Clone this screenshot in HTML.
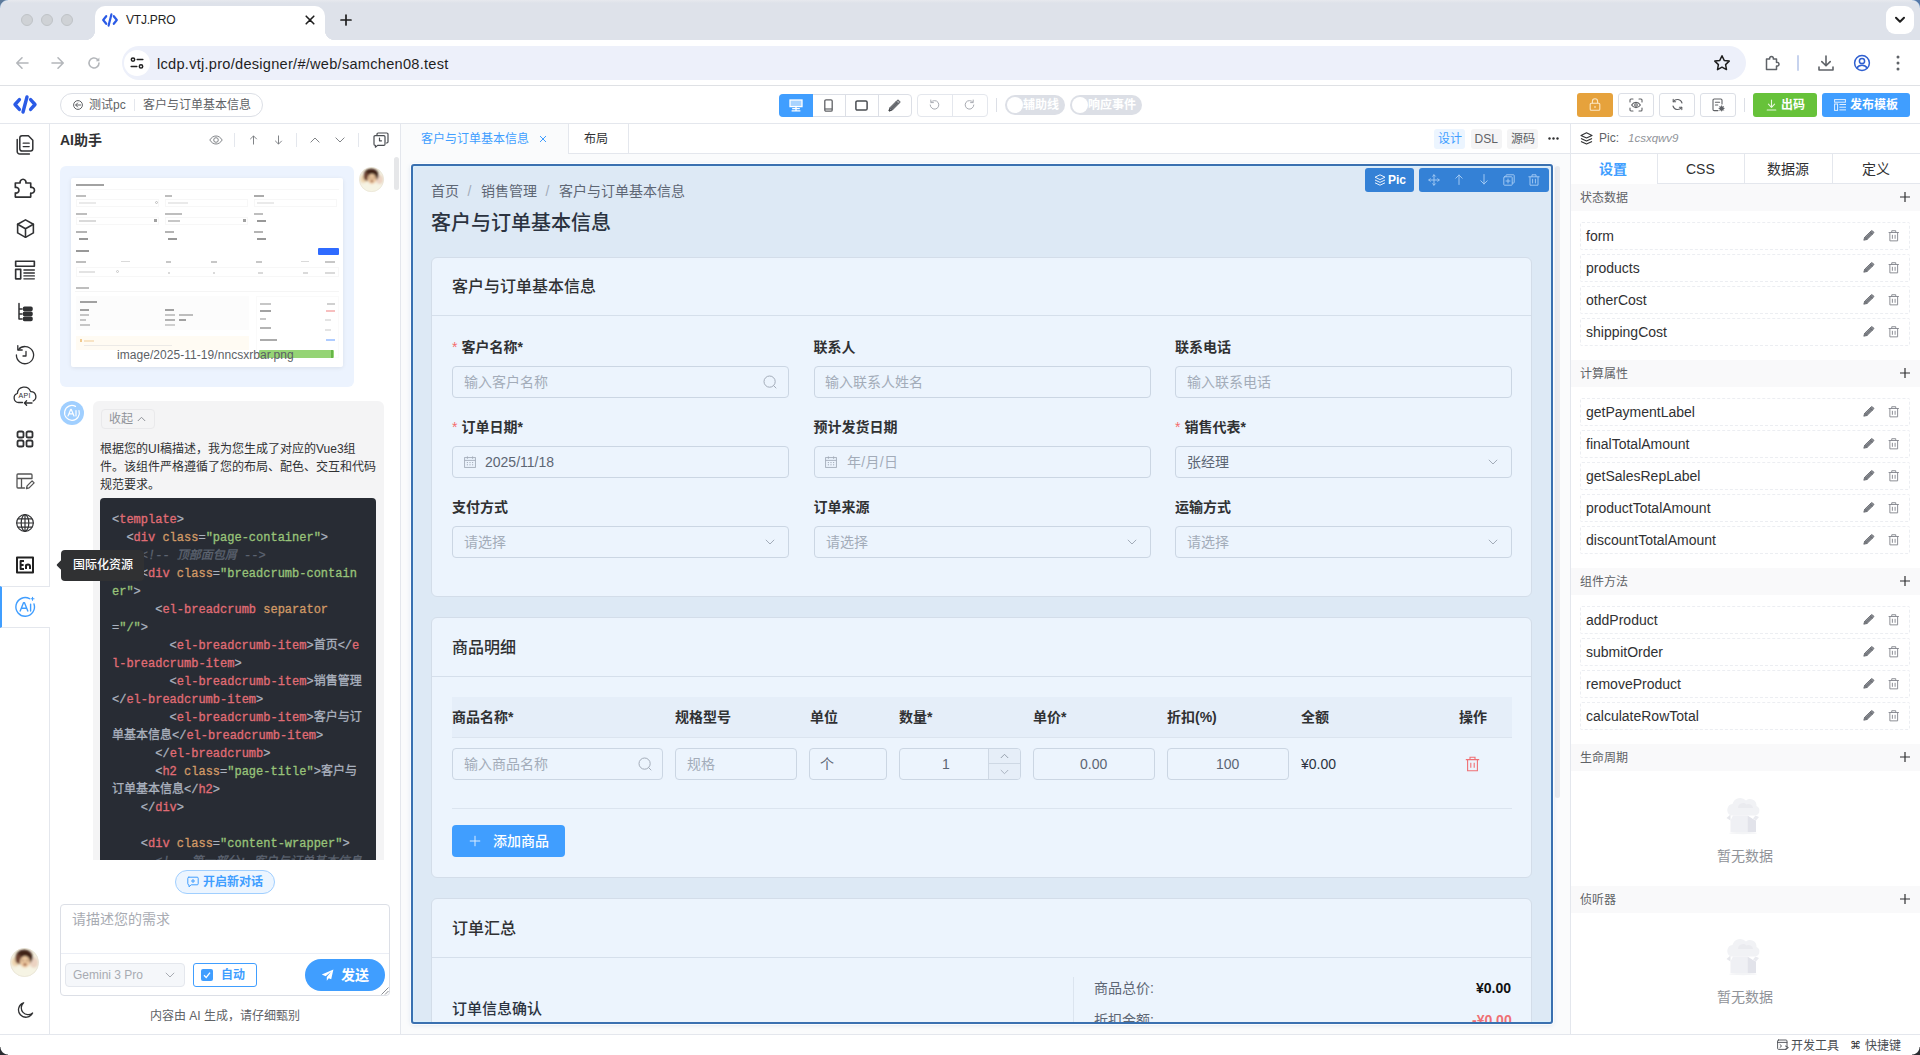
<!DOCTYPE html>
<html lang="zh-CN">
<head>
<meta charset="utf-8">
<title>VTJ.PRO</title>
<style>
*{box-sizing:border-box;margin:0;padding:0}
html,body{width:1920px;height:1055px;overflow:hidden;background:#fff}
body{font-family:"Liberation Sans","Noto Sans CJK SC",sans-serif;font-size:14px;color:#303133;position:relative}
.abs{position:absolute}
.t{position:absolute;white-space:nowrap;line-height:1}
svg{display:block;overflow:visible}
.ico{position:absolute}
/* ===== browser chrome ===== */
#tabbar{left:0;top:0;width:1920px;height:40px;background:linear-gradient(#e7e9ee 0,#dee2ea 3px,#dee2ea 100%)}
#tab{left:95px;top:6px;width:230px;height:34px;background:#fff;border-radius:10px 10px 0 0}
#tab:before,#tab:after{content:"";position:absolute;bottom:0;width:10px;height:10px}
#tab:before{left:-10px;background:radial-gradient(circle at 0 0,transparent 10px,#fff 10.5px)}
#tab:after{right:-10px;background:radial-gradient(circle at 100% 0,transparent 10px,#fff 10.5px)}
.tl{position:absolute;top:14px;width:12px;height:12px;border-radius:50%;background:#cfd2d6;border:1px solid #bfc3c7}
#addr{left:0;top:40px;width:1920px;height:46px;background:#fff;border-bottom:1px solid #dfe1e5}
#urlpill{left:122px;top:46px;width:1624px;height:34px;border-radius:17px;background:#edf0fa}
/* ===== app toolbar ===== */
#apptb{left:0;top:87px;width:1920px;height:37px;background:#fff;border-bottom:1px solid #e4e7ed}
.btn{position:absolute;top:94px;height:23px;border:1px solid #dcdfe6;border-radius:3px;background:#fff}
/* ===== panels ===== */
#lside{left:0;top:124px;width:50px;height:910px;background:#fff;border-right:1px solid #e4e7ed}
#aipanel{left:50px;top:124px;width:351px;height:910px;background:#fff;border-right:1px solid #e4e7ed}
#center{left:401px;top:124px;width:1169px;height:910px;background:#fafbfc}
#rpanel{left:1570px;top:124px;width:350px;height:910px;background:#fff;border-left:1px solid #e4e7ed}
#status{left:0;top:1034px;width:1920px;height:21px;background:#fff;border-top:1px solid #e4e7ed}

#thumb i{position:absolute;display:block;opacity:.55}
#code{font-family:"Liberation Mono","Noto Sans CJK SC",monospace;font-size:12px;color:#abb2bf;-webkit-text-stroke:.3px}
.cl{position:absolute;left:12px;white-space:pre;line-height:18px;height:18px}
.cp{color:#abb2bf}.ct{color:#e06c75}.ca{color:#d19a66}.cs{color:#98c379}.cc{color:#5c6370;font-style:italic}

/* center */
#sel{left:411px;top:164px;width:1142px;height:860px;border:2px solid #3a70b0;border-radius:3px;background:#dde9f5;overflow:hidden;box-shadow:0 0 0 1px rgba(255,255,255,.8),0 1px 5px rgba(60,110,180,.18),inset 0 0 0 1px rgba(214,240,255,.9)}
#page{position:absolute;left:-413px;top:-166px;width:1920px;height:1055px}
.card{position:absolute;left:431px;width:1101px;border:1px solid #d3dde9;border-radius:6px;background:#ecf4fd}
.chd{position:absolute;font-size:16px;font-weight:500;color:#303133;white-space:nowrap;line-height:1}
.hl{position:absolute;height:1px;background:#d5dfeb}
.lbl{position:absolute;font-size:14px;font-weight:700;color:#303133;white-space:nowrap;line-height:1}
.req{color:#f56c6c;font-weight:400;margin-right:4px}
.inp{position:absolute;height:32px;border:1px solid #cbd6e3;border-radius:4px;background:#ecf4fd}
.ph{position:absolute;font-size:14px;color:#a3acb9;white-space:nowrap;line-height:1}
.val{position:absolute;font-size:14px;color:#5d6674;white-space:nowrap;line-height:1}

/* right panel */
.sec{position:absolute;left:1571px;width:349px;height:27px;background:#f9f9fa}
.sect{position:absolute;left:1580px;font-size:12px;color:#606266;white-space:nowrap;line-height:1}
.item{position:absolute;left:1580px;width:330px;height:28px;border:1px dashed #eceef2;border-radius:2px}
.itxt{position:absolute;left:1586px;font-size:14px;color:#303133;white-space:nowrap;line-height:1}
.empt{position:absolute;font-size:14px;color:#909399;white-space:nowrap;line-height:1;left:1717px}
</style>
</head>
<body>
<!-- ================= BROWSER CHROME ================= -->
<div class="abs" id="tabbar"></div>
<div class="abs" id="tab"></div>
<div class="tl" style="left:21px"></div><div class="tl" style="left:41px"></div><div class="tl" style="left:61px"></div>
<div class="abs" id="addr"></div>
<div class="abs" id="urlpill"></div>

<!-- tab -->
<svg class="ico" style="left:102px;top:13px" width="16" height="14" viewBox="0 0 16 14"><g fill="none" stroke="#2b5be6" stroke-width="2.2" stroke-linecap="round" stroke-linejoin="round"><path d="M4.2 3.2 1.2 7l3 3.8"/><path d="M11.8 3.2 14.8 7l-3 3.8"/><path d="M9.4 1.4 6.6 12.6"/></g></svg>
<div class="t" style="left:126px;top:14px;font-size:12px;color:#1f1f1f;letter-spacing:-0.2px">VTJ.PRO</div>
<svg class="ico" style="left:305px;top:15px" width="10" height="10" viewBox="0 0 10 10"><path d="M1.2 1.2l7.6 7.6M8.8 1.2 1.2 8.8" stroke="#1f1f1f" stroke-width="1.6" stroke-linecap="round"/></svg>
<svg class="ico" style="left:340px;top:14px" width="12" height="12" viewBox="0 0 12 12"><path d="M6 1v10M1 6h10" stroke="#1f1f1f" stroke-width="1.7" stroke-linecap="round"/></svg>
<div class="abs" style="left:1886px;top:6px;width:28px;height:28px;border-radius:9px;background:#fff"></div>
<svg class="ico" style="left:1894px;top:16px" width="12" height="8" viewBox="0 0 12 8"><path d="M2 1.8 6 5.8l4-4" fill="none" stroke="#1f1f1f" stroke-width="2" stroke-linecap="round" stroke-linejoin="round"/></svg>
<!-- nav icons -->
<svg class="ico" style="left:15px;top:56px" width="14" height="14" viewBox="0 0 14 14"><path d="M13 7H2M7 1.8 1.8 7 7 12.2" fill="none" stroke="#b4b7bb" stroke-width="1.6" stroke-linecap="round" stroke-linejoin="round"/></svg>
<svg class="ico" style="left:51px;top:56px" width="14" height="14" viewBox="0 0 14 14"><path d="M1 7h11M7 1.8 12.2 7 7 12.2" fill="none" stroke="#b4b7bb" stroke-width="1.6" stroke-linecap="round" stroke-linejoin="round"/></svg>
<svg class="ico" style="left:87px;top:56px" width="14" height="14" viewBox="0 0 14 14"><path d="M12 7a5 5 0 1 1-1.6-3.7" fill="none" stroke="#b4b7bb" stroke-width="1.6" stroke-linecap="round"/><path d="M12.4 1.6v3.6H8.8z" fill="#b4b7bb"/></svg>
<div class="abs" style="left:124px;top:50px;width:26px;height:26px;border-radius:50%;background:#fff"></div>
<svg class="ico" style="left:130px;top:57px" width="14" height="12" viewBox="0 0 14 12"><g fill="none" stroke="#1f1f1f" stroke-width="1.5" stroke-linecap="round"><circle cx="3" cy="2.6" r="1.7"/><path d="M7.2 2.6h5.6"/><circle cx="11" cy="9.4" r="1.7"/><path d="M1.2 9.4h5.6"/></g></svg>
<div class="t" style="left:157px;top:56.500px;font-size:14.6px;color:#1f1f1f;letter-spacing:0.26px">lcdp.vtj.pro/designer/#/web/samchen08.test</div>
<svg class="ico" style="left:1713px;top:54px" width="18" height="18" viewBox="0 0 18 18"><path d="M9 1.8l2.2 4.6 5 .7-3.6 3.5.9 5L9 13.2l-4.5 2.4.9-5L1.8 7.1l5-.7z" fill="none" stroke="#1f1f1f" stroke-width="1.5" stroke-linejoin="round"/></svg>
<svg class="ico" style="left:1764px;top:54px" width="18" height="18" viewBox="0 0 18 18"><path d="M2.5 5h3.2a1.9 1.9 0 1 1 3.6 0h3.2v3.4a1.9 1.9 0 1 1 0 3.6v3.5h-10z" fill="none" stroke="#5f6368" stroke-width="1.5" stroke-linejoin="round"/></svg>
<div class="abs" style="left:1797px;top:55px;width:2px;height:16px;background:#c7d3ee;border-radius:1px"></div>
<svg class="ico" style="left:1817px;top:54px" width="18" height="18" viewBox="0 0 18 18"><path d="M9 2v9.5M4.8 7.6 9 11.8l4.2-4.2M2 13v3h14v-3" fill="none" stroke="#5f6368" stroke-width="1.6" stroke-linecap="round" stroke-linejoin="round"/></svg>
<svg class="ico" style="left:1853px;top:54px" width="18" height="18" viewBox="0 0 18 18"><g fill="none" stroke="#2f5fd0" stroke-width="1.5"><circle cx="9" cy="9" r="7.4"/><circle cx="9" cy="7" r="2.6"/><path d="M3.8 14.2c1.2-2 3-2.9 5.2-2.9s4 .9 5.2 2.9"/></g></svg>
<svg class="ico" style="left:1896px;top:55px" width="4" height="16" viewBox="0 0 4 16"><g fill="#5f6368"><circle cx="2" cy="2" r="1.5"/><circle cx="2" cy="8" r="1.5"/><circle cx="2" cy="14" r="1.5"/></g></svg>
<!--CHROME-CONTENT-->
<!-- ================= APP TOOLBAR ================= -->
<div class="abs" id="apptb"></div>

<svg class="ico" style="left:13px;top:95px" width="24" height="19" viewBox="0 0 24 19"><g fill="none" stroke="#2b5be6" stroke-width="3.4" stroke-linecap="round" stroke-linejoin="round"><path d="M6.4 4.6 2 9.5l4.4 4.9"/><path d="M17.6 4.6 22 9.5l-4.4 4.9"/><path d="M14 2 10 17"/></g></svg>
<div class="abs" style="left:60px;top:93px;width:203px;height:24px;border:1px solid #dcdfe6;border-radius:12px;background:#fff"></div>
<svg class="ico" style="left:73px;top:100px" width="10" height="10" viewBox="0 0 10 10"><g fill="none" stroke="#606266" stroke-width="1"><circle cx="5" cy="5" r="4.4"/><path d="M7.6 5H2.8M4.6 3 2.7 5l1.9 2" stroke-linecap="round" stroke-linejoin="round"/></g></svg>
<div class="t" style="left:89px;top:99px;font-size:12px;color:#606266">测试pc</div>
<div class="abs" style="left:134px;top:99px;width:1px;height:12px;background:#e4e7ed"></div>
<div class="t" style="left:143px;top:99px;font-size:12px;color:#606266">客户与订单基本信息</div>
<!-- device group -->
<div class="abs" style="left:779px;top:94px;width:133px;height:23px;border:1px solid #dcdfe6;border-radius:4px;background:#fff"></div>
<div class="abs" style="left:779px;top:94px;width:34px;height:23px;border-radius:4px 0 0 4px;background:#409eff"></div>
<div class="abs" style="left:845px;top:95px;width:1px;height:21px;background:#dcdfe6"></div>
<div class="abs" style="left:878px;top:95px;width:1px;height:21px;background:#dcdfe6"></div>
<svg class="ico" style="left:789px;top:99px" width="14" height="13" viewBox="0 0 14 13"><g fill="none" stroke="#fff" stroke-width="1.3"><rect x="1" y="1" width="12" height="6.6" fill="#a9d4ff"/><path d="M7 7.6v4M2.6 11.8h8.8M3.2 9.6h7.6"/></g></svg>
<svg class="ico" style="left:824px;top:99px" width="9" height="13" viewBox="0 0 9 13"><rect x=".8" y=".8" width="7.4" height="11.4" rx="1.2" fill="none" stroke="#606266" stroke-width="1.3"/><path d="M1 10h7" stroke="#606266" stroke-width="1.2"/></svg>
<svg class="ico" style="left:855px;top:100px" width="13" height="11" viewBox="0 0 13 11"><rect x=".9" y=".9" width="11.2" height="9.2" rx="1.4" fill="none" stroke="#4a4d52" stroke-width="1.5"/></svg>
<svg class="ico" style="left:888px;top:99px" width="13" height="13" viewBox="0 0 13 13"><g stroke="#45484d" stroke-width=".9" stroke-linejoin="round"><path d="M1 12l.9-3.300L9.200 1.400a1.100 1.100 0 0 1 1.600 0l.8.800a1.100 1.100 0 0 1 0 1.600L4.300 11.100z" fill="#a0a3a8"/><path d="M8 2.600 10.400 5M1.900 8.700l2.400 2.400M3.100 9.900 9.200 3.800M2.500 9.300 8.600 3.200M3.700 10.500 9.800 4.400" fill="none" stroke-width=".7"/><path d="M1 12l.5-1.800 1.300 1.300z" fill="#222"/></g></svg>
<!-- undo/redo -->
<div class="abs" style="left:917px;top:94px;width:71px;height:23px;border:1px solid #e4e7ed;border-radius:4px;background:#fff"></div>
<div class="abs" style="left:952px;top:95px;width:1px;height:21px;background:#e4e7ed"></div>
<svg class="ico" style="left:929px;top:99px" width="11" height="11" viewBox="0 0 11 11"><path d="M2.1 3.2A4.3 4.3 0 1 1 1.2 6" fill="none" stroke="#a8abb2" stroke-width="1" stroke-linecap="round"/><path d="M1.8 1v2.6h2.6" fill="none" stroke="#a8abb2" stroke-width="1" stroke-linecap="round" stroke-linejoin="round"/></svg>
<svg class="ico" style="left:964px;top:99px" width="11" height="11" viewBox="0 0 11 11"><path d="M8.9 3.2A4.3 4.3 0 1 0 9.8 6" fill="none" stroke="#a8abb2" stroke-width="1" stroke-linecap="round"/><path d="M9.2 1v2.6H6.600" fill="none" stroke="#a8abb2" stroke-width="1" stroke-linecap="round" stroke-linejoin="round"/></svg>
<div class="abs" style="left:996px;top:98px;width:1px;height:14px;background:#dcdfe6"></div>
<!-- switches -->
<div class="abs" style="left:1005px;top:95px;width:60px;height:20px;border-radius:10px;background:#dcdfe6"></div>
<div class="abs" style="left:1007px;top:97px;width:16px;height:16px;border-radius:50%;background:#fff"></div>
<div class="t" style="left:1023px;top:99px;font-size:12px;color:#fff;font-weight:700">辅助线</div>
<div class="abs" style="left:1070px;top:95px;width:72px;height:20px;border-radius:10px;background:#dcdfe6"></div>
<div class="abs" style="left:1072px;top:97px;width:16px;height:16px;border-radius:50%;background:#fff"></div>
<div class="t" style="left:1088px;top:99px;font-size:12px;color:#fff;font-weight:700">响应事件</div>
<!-- right buttons -->
<div class="abs" style="left:1577px;top:93px;width:36px;height:24px;border-radius:3px;background:#e6a23c"></div>
<svg class="ico" style="left:1589px;top:98px" width="12" height="13" viewBox="0 0 12 13"><g fill="none" stroke="#fbe7c6" stroke-width="1.1"><rect x="1.2" y="5.2" width="9.600" height="7" rx="1"/><path d="M3.4 5.200V3.400a2.600 2.600 0 0 1 5.200 0v1.800M6 8v2"/></g></svg>
<div class="btn" style="left:1618px;top:93px;width:36px;height:24px"></div>
<svg class="ico" style="left:1629px;top:98px" width="14" height="14" viewBox="0 0 14 14"><g fill="none" stroke="#606266" stroke-width="1.1" stroke-linecap="round"><path d="M1 4V2a1 1 0 0 1 1-1h2M10 1h2a1 1 0 0 1 1 1v2M13 10v2a1 1 0 0 1-1 1h-2M4 13H2a1 1 0 0 1-1-1v-2"/><path d="M2.600 7c1.200-1.800 2.700-2.600 4.400-2.600s3.200.8 4.400 2.600c-1.200 1.800-2.700 2.600-4.400 2.600S3.800 8.800 2.600 7z"/><circle cx="7" cy="7" r="1.300"/></g></svg>
<div class="btn" style="left:1659px;top:93px;width:36px;height:24px"></div>
<svg class="ico" style="left:1671px;top:98px" width="13" height="13" viewBox="0 0 13 13"><g fill="none" stroke="#606266" stroke-width="1.100" stroke-linecap="round" stroke-linejoin="round"><path d="M11 5A4.800 4.800 0 0 0 2.400 3.600M2 8a4.800 4.800 0 0 0 8.600 1.400"/><path d="M2.200 1.400v2.400h2.400M10.800 11.600V9.200H8.400"/></g></svg>
<div class="btn" style="left:1700px;top:93px;width:36px;height:24px"></div>
<svg class="ico" style="left:1712px;top:98px" width="13" height="14" viewBox="0 0 13 14"><g fill="none" stroke="#606266" stroke-width="1.100" stroke-linecap="round" stroke-linejoin="round"><path d="M6 12.600H2.200a1.200 1.200 0 0 1-1.200-1.200V2.200A1.200 1.200 0 0 1 2.200 1h6.600A1.200 1.200 0 0 1 10 2.200V6M3.400 4.200h4.200M3.400 7h2.400"/><circle cx="9.600" cy="10.400" r="1.700" fill="#606266"/><path d="M9.600 7.800v5.200M7 10.400h5.200M7.800 8.600l3.600 3.600M11.400 8.600l-3.600 3.600" stroke-width=".9"/></g></svg>
<div class="abs" style="left:1744px;top:98px;width:1px;height:14px;background:#dcdfe6"></div>
<div class="abs" style="left:1753px;top:93px;width:64px;height:24px;border-radius:3px;background:#67c23a"></div>
<svg class="ico" style="left:1766px;top:99px" width="11" height="12" viewBox="0 0 11 12"><path d="M5.500 1v7M2.400 5.200l3.100 3.100 3.100-3.100M1.200 11h8.600" fill="none" stroke="#e6f6dd" stroke-width="1.100" stroke-linecap="round" stroke-linejoin="round"/></svg>
<div class="t" style="left:1781px;top:99px;font-size:12px;color:#fff;font-weight:700">出码</div>
<div class="abs" style="left:1822px;top:93px;width:88px;height:24px;border-radius:3px;background:#409eff"></div>
<svg class="ico" style="left:1834px;top:99px" width="12" height="12" viewBox="0 0 12 12"><g fill="none" stroke="#e3f0ff" stroke-width="1"><rect x=".6" y=".6" width="10.800" height="2.600"/><rect x=".6" y="5" width="3" height="6.400"/><path d="M5.400 5.500H12M5.400 8.200H12M5.400 10.900H12"/></g></svg>
<div class="t" style="left:1850px;top:99px;font-size:12px;color:#fff;font-weight:700">发布模板</div>
<!--TOOLBAR-CONTENT-->
<!-- ================= PANELS ================= -->
<div class="abs" id="lside"></div>
<div class="abs" id="aipanel"></div>
<div class="abs" id="center"></div>
<div class="abs" id="rpanel"></div>
<div class="abs" id="status"></div>
<svg class="ico" style="left:15px;top:135px" width="20" height="20" viewBox="0 0 20 20"><g fill="none" stroke="#303133" stroke-width="1.5" stroke-linecap="round" stroke-linejoin="round"><path d="M7 0.800h6.400l4.400 4.400v8.600a2.200 2.200 0 0 1-2.200 2.200H7a2.200 2.200 0 0 1-2.200-2.200V3A2.200 2.200 0 0 1 7 .8z"/><path d="M2.200 4.400v12a2.600 2.600 0 0 0 2.600 2.600h9.600"/><path d="M8.200 8.200h6M8.200 11.600h6" stroke-width="1.300"/></g></svg>
<svg class="ico" style="left:14px;top:175.500px" width="22" height="22" viewBox="0 0 20 20"><g fill="none" stroke="#303133" stroke-width="1.5" stroke-linecap="round" stroke-linejoin="round"><path d="M1.200 6.400h4.400a2.700 2.700 0 1 1 5.200 0h4.400v4a2.700 2.700 0 1 1 0 5.200v3.600H1.200v-3.800a2.600 2.600 0 1 0 0-5z"/></g></svg>
<svg class="ico" style="left:14.500px;top:217.500px" width="21" height="21" viewBox="0 0 20 20"><g fill="none" stroke="#303133" stroke-width="1.5" stroke-linecap="round" stroke-linejoin="round"><path d="M10 1.800 17.500 6v8.200L10 18.400 2.500 14.200V6z"/><path d="M2.500 6 10 10.200 17.500 6M10 10.200v8.200"/></g></svg>
<svg class="ico" style="left:14px;top:259px" width="22" height="22" viewBox="0 0 20 20"><g fill="none" stroke="#303133" stroke-width="1.5" stroke-linecap="round" stroke-linejoin="round"><rect x="1.500" y="2" width="17" height="4.600"/><rect x="1.500" y="9.400" width="4.600" height="8.600"/><path d="M9 10h9.500M9 12.700h9.500M9 15.400h9.500M9 18h9.500" stroke-width="1.200"/></g></svg>
<svg class="ico" style="left:15px;top:302px" width="20" height="20" viewBox="0 0 20 20"><g fill="none" stroke="#303133" stroke-width="1.5" stroke-linecap="round" stroke-linejoin="round"><path d="M4 1.500v15.500h3M4 7h3M4 12h3"/><rect x="8.500" y="5.200" width="8.500" height="3.200" rx="1" fill="#303133"/><rect x="8.500" y="10.200" width="8.500" height="3.200" rx="1" fill="#303133"/><rect x="8.500" y="15.200" width="8.500" height="3.200" rx="1" fill="#303133"/></g></svg>
<svg class="ico" style="left:15px;top:345px" width="20" height="20" viewBox="0 0 20 20"><g fill="none" stroke="#303133" stroke-width="1.5" stroke-linecap="round" stroke-linejoin="round"><path d="M3.400 4.600A8.600 8.600 0 1 1 1.400 10" stroke-width="1.300"/><path d="M2.800 0.600v4.400h4.400" stroke-width="1.300"/><path d="M11 6.500v4.500h-3" stroke-width="1.300"/></g></svg>
<svg class="ico" style="left:15px;top:387px" width="20" height="20" viewBox="0 0 20 20"><g fill="none" stroke="#303133" stroke-width="1.5" stroke-linecap="round" stroke-linejoin="round"><path d="M7.500 15.500H3.600a4.600 4.600 0 0 1-1.200-9A6.800 6.800 0 0 1 15.600 4.600a5 5 0 0 1 2.600 9.400" stroke-width="1.300"/><path d="M17 16H9.500M11.600 13.800l-2.200 2.200 2.200 2.200" stroke-width="1.300"/></g></svg>
<svg class="ico" style="left:15px;top:429px" width="20" height="20" viewBox="0 0 20 20"><g fill="none" stroke="#303133" stroke-width="1.5" stroke-linecap="round" stroke-linejoin="round"><rect x="2.500" y="2.500" width="6" height="6" rx="1.600" stroke-width="1.800"/><rect x="11.500" y="2.500" width="6" height="6" rx="1.600" stroke-width="1.800"/><rect x="2.500" y="11.500" width="6" height="6" rx="1.600" stroke-width="1.800"/><rect x="11.500" y="11.500" width="6" height="6" rx="1.600" stroke-width="1.800"/></g></svg>
<svg class="ico" style="left:15px;top:471px" width="20" height="20" viewBox="0 0 20 20"><g fill="none" stroke="#303133" stroke-width="1.5" stroke-linecap="round" stroke-linejoin="round"><path d="M17 7.500V4a1 1 0 0 0-1-1H3a1 1 0 0 0-1 1v12a1 1 0 0 0 1 1h6.500M2 7.500h15M6.500 7.500V17" stroke-width="1.300" stroke="#555"/><path d="M11.500 17.500l.6-2.600 5-5 2 2-5 5z" stroke-width="1.300" stroke="#555"/></g></svg>
<svg class="ico" style="left:15px;top:513px" width="20" height="20" viewBox="0 0 20 20"><g fill="none" stroke="#303133" stroke-width="1.5" stroke-linecap="round" stroke-linejoin="round"><circle cx="10" cy="10" r="8.300" stroke-width="1.200"/><ellipse cx="10" cy="10" rx="3.800" ry="8.300" stroke-width="1.200"/><path d="M10 1.700v16.600M1.700 10h16.600M3 5.800h14M3 14.200h14" stroke-width="1.200"/></g></svg>
<svg class="ico" style="left:15px;top:555px" width="20" height="20" viewBox="0 0 20 20"><g fill="none" stroke="#303133" stroke-width="1.5" stroke-linecap="round" stroke-linejoin="round"><rect x="2" y="2.500" width="16" height="15" stroke-width="2" stroke="#222"/><path d="M9 6H5.600v8H9M5.600 10h3M11 14v-4.500M11 11.500c0-1.200.8-2 2-2s2 .8 2 2V14" stroke-width="2" stroke="#222" stroke-linecap="butt"/></g></svg>
<div class="t" style="left:18.500px;top:392px;font-size:7px;color:#303133;letter-spacing:0.300px">API</div>
<div class="abs" style="left:0;top:586px;width:50px;height:42px;background:#fff;border-top:1px solid #e4e7ed;border-bottom:1px solid #e4e7ed;border-left:2px solid #409eff"></div>
<svg class="ico" style="left:14px;top:596px" width="23" height="22" viewBox="0 0 23 22"><g fill="none" stroke="#409eff" stroke-width="1.400" stroke-linecap="round" stroke-linejoin="round"><path d="M15.500 2.700A9.300 9.300 0 1 0 20 8"/><path d="M6.200 15 9.600 6.600h.8L13.800 15M7.400 12.200h5.200M16.600 8.200V15"/><path d="M18.500 1.200v3M17 2.700h3" stroke-width="1.100"/></g></svg>
<svg class="ico" style="left:9.5px;top:948px" width="29" height="29" viewBox="0 0 25 25"><defs><clipPath id="avcb"><circle cx="12.500" cy="12.500" r="12.300"/></clipPath><filter id="avbb" x="-20%" y="-20%" width="140%" height="140%"><feGaussianBlur stdDeviation="0.800"/></filter></defs><g clip-path="url(#avcb)"><rect width="25" height="25" fill="#f3efdf"/><g filter="url(#avbb)"><ellipse cx="12.500" cy="22" rx="12" ry="7" fill="#f6f4e4"/><ellipse cx="20.500" cy="12.500" rx="3.600" ry="4.600" fill="#ecd3c2"/><ellipse cx="4.800" cy="12" rx="3.400" ry="3.800" fill="#efd6b0"/><ellipse cx="12.200" cy="8" rx="7.400" ry="6.600" fill="#3f2418"/><ellipse cx="7.200" cy="9.500" rx="2.600" ry="4" fill="#6e4232"/><ellipse cx="12.900" cy="12" rx="4.300" ry="5" fill="#f0caa2"/><ellipse cx="12.900" cy="14.200" rx="1.400" ry="1.100" fill="#8a4a30"/><circle cx="11.200" cy="10.800" r=".7" fill="#4a2a1c"/><circle cx="14.700" cy="10.800" r=".7" fill="#4a2a1c"/></g></g><circle cx="12.500" cy="12.500" r="12.100" fill="none" stroke="#e4ded2" stroke-width=".5"/></svg>
<svg class="ico" style="left:15px;top:1001px" width="19" height="19" viewBox="0 0 19 19"><path d="M8.600 1.800A7.400 7.400 0 1 0 17.600 12 6.700 6.700 0 0 1 8.600 1.800z" fill="none" stroke="#303133" stroke-width="1.300" stroke-linejoin="round"/></svg>
<!--LSIDE-CONTENT-->

<!-- header -->
<div class="t" style="left:60px;top:133px;font-size:14px;font-weight:700;color:#303133">AI助手</div>
<svg class="ico" style="left:209px;top:135px" width="14" height="10" viewBox="0 0 14 10"><g fill="none" stroke="#73767a" stroke-width=".9"><path d="M.8 5C2.500 2.300 4.600 1 7 1s4.500 1.300 6.200 4C11.500 7.700 9.400 9 7 9S2.500 7.700.8 5z"/><circle cx="7" cy="5" r="2.300"/></g></svg>
<div class="abs" style="left:234px;top:133px;width:1px;height:14px;background:#e4e7ed"></div>
<svg class="ico" style="left:249px;top:135px" width="9" height="10" viewBox="0 0 9 10"><path d="M4.500 9.500V1M1.200 4.200 4.500.9l3.300 3.300" fill="none" stroke="#73767a" stroke-width=".9"/></svg>
<svg class="ico" style="left:274px;top:135px" width="9" height="10" viewBox="0 0 9 10"><path d="M4.500.5V9M1.200 5.800 4.500 9.100l3.300-3.300" fill="none" stroke="#73767a" stroke-width=".9"/></svg>
<div class="abs" style="left:296px;top:133px;width:1px;height:14px;background:#e4e7ed"></div>
<svg class="ico" style="left:310px;top:137px" width="10" height="6" viewBox="0 0 10 6"><path d="M.6 5.400 5 1l4.400 4.400" fill="none" stroke="#73767a" stroke-width=".9"/></svg>
<svg class="ico" style="left:335px;top:137px" width="10" height="6" viewBox="0 0 10 6"><path d="M.6.600 5 5l4.400-4.400" fill="none" stroke="#73767a" stroke-width=".9"/></svg>
<div class="abs" style="left:358px;top:133px;width:1px;height:14px;background:#e4e7ed"></div>
<svg class="ico" style="left:373px;top:132px" width="16" height="16" viewBox="0 0 16 16"><g fill="none" stroke="#4a4d52" stroke-width="1.200" stroke-linejoin="round"><path d="M4 3V2.200A1.200 1.200 0 0 1 5.200 1h8.600A1.200 1.200 0 0 1 15 2.200v7.600a1.200 1.200 0 0 1-1.200 1.200H13"/><path d="M2.200 3.600h8.600A1.200 1.200 0 0 1 12 4.800v7.400a1.200 1.200 0 0 1-1.200 1.200H4.600L2.400 15.200v-1.800h-.2A1.200 1.200 0 0 1 1 12.200V4.800a1.200 1.200 0 0 1 1.200-1.200z"/><path d="M6.500 6v2.800h2" stroke-linecap="round"/></g></svg>
<!-- scrollbar -->
<div class="abs" style="left:394px;top:157px;width:5px;height:33px;border-radius:3px;background:#e6e7e9"></div>

<div class="abs" style="left:60px;top:166px;width:294px;height:221px;border-radius:6px;background:#ecf3fe"></div>
<div class="abs" style="left:71px;top:178px;width:272px;height:189px;background:#fff;border-radius:2px;box-shadow:0 1px 4px rgba(0,0,0,.08)"></div>
<div class="abs" id="thumb" style="left:71px;top:178px;width:272px;height:189px;overflow:hidden">
 <i style="left:5px;top:6px;width:28px;height:2px;background:#555"></i>
 <i style="left:4px;top:11px;width:264px;height:1px;background:#f0f0f0"></i>
 <i style="left:5px;top:17px;width:10px;height:2px;background:#888"></i><i style="left:94px;top:17px;width:7px;height:2px;background:#888"></i><i style="left:183px;top:17px;width:10px;height:2px;background:#666"></i>
 <i style="left:5px;top:21px;width:83px;height:8px;border:1px solid #f1f1f1"></i><i style="left:94px;top:21px;width:83px;height:8px;border:1px solid #f1f1f1"></i><i style="left:183px;top:21px;width:83px;height:8px;border:1px solid #f1f1f1"></i>
 <i style="left:8px;top:24px;width:17px;height:2px;background:#d8d8d8"></i><i style="left:97px;top:24px;width:20px;height:2px;background:#d8d8d8"></i><i style="left:186px;top:24px;width:17px;height:2px;background:#d8d8d8"></i><i style="left:84px;top:23px;width:3px;height:3px;border-radius:50%;border:1px solid #999"></i>
 <i style="left:5px;top:35px;width:11px;height:2px;background:#888"></i><i style="left:94px;top:35px;width:17px;height:2px;background:#888"></i><i style="left:183px;top:35px;width:9px;height:2px;background:#888"></i>
 <i style="left:5px;top:39px;width:83px;height:8px;border:1px solid #f1f1f1"></i><i style="left:94px;top:39px;width:83px;height:8px;border:1px solid #f1f1f1"></i>
 <i style="left:8px;top:42px;width:17px;height:2px;background:#bbb"></i><i style="left:97px;top:42px;width:12px;height:2px;background:#999"></i><i style="left:186px;top:42px;width:9px;height:2px;background:#444"></i><i style="left:83px;top:41px;width:3px;height:3px;background:#555"></i><i style="left:172px;top:41px;width:3px;height:3px;background:#555"></i>
 <i style="left:5px;top:53px;width:11px;height:2px;background:#777"></i><i style="left:94px;top:53px;width:9px;height:2px;background:#777"></i><i style="left:183px;top:53px;width:9px;height:2px;background:#777"></i>
 <i style="left:8px;top:60px;width:9px;height:2px;background:#444"></i><i style="left:97px;top:60px;width:9px;height:2px;background:#444"></i><i style="left:186px;top:60px;width:9px;height:2px;background:#444"></i>
 <i style="left:5px;top:72px;width:13px;height:2px;background:#444"></i>
 <i style="left:247px;top:70px;width:21px;height:7px;background:#2f6bff;border-radius:1px;opacity:1"></i>
 <i style="left:5px;top:83px;width:10px;height:2px;background:#888"></i><i style="left:50px;top:83px;width:9px;height:1px;background:#bbb"></i><i style="left:95px;top:83px;width:5px;height:2px;background:#999"></i><i style="left:140px;top:83px;width:6px;height:2px;background:#999"></i><i style="left:185px;top:83px;width:6px;height:2px;background:#999"></i><i style="left:230px;top:83px;width:8px;height:1px;background:#bbb"></i><i style="left:254px;top:83px;width:10px;height:2px;background:#999"></i>
 <i style="left:5px;top:89px;width:263px;height:10px;border:1px solid #f1f1f1"></i>
 <i style="left:8px;top:93px;width:16px;height:2px;background:#ccc"></i><i style="left:45px;top:92px;width:3px;height:3px;border-radius:50%;border:1px solid #aaa"></i><i style="left:97px;top:94px;width:2px;height:2px;background:#bbb"></i><i style="left:142px;top:94px;width:2px;height:2px;background:#bbb"></i><i style="left:187px;top:94px;width:5px;height:2px;background:#bbb"></i><i style="left:232px;top:94px;width:5px;height:2px;background:#bbb"></i><i style="left:254px;top:94px;width:10px;height:2px;background:#bbb"></i>
 <i style="left:5px;top:109px;width:13px;height:2px;background:#888"></i>
 <i style="left:4px;top:113px;width:264px;height:1px;background:#ececec"></i>
 <i style="left:5px;top:118px;width:173px;height:34px;background:#fafafa"></i>
 <i style="left:9px;top:123px;width:17px;height:2px;background:#555"></i>
 <i style="left:9px;top:131px;width:9px;height:2px;background:#555"></i><i style="left:94px;top:131px;width:9px;height:2px;background:#555"></i>
 <i style="left:9px;top:136px;width:9px;height:2px;background:#999"></i><i style="left:94px;top:136px;width:10px;height:2px;background:#999"></i><i style="left:108px;top:136px;width:14px;height:2px;background:#888"></i>
 <i style="left:9px;top:141px;width:6px;height:2px;background:#999"></i><i style="left:94px;top:141px;width:10px;height:2px;background:#777"></i><i style="left:108px;top:141px;width:7px;height:2px;background:#555"></i>
 <i style="left:9px;top:146px;width:10px;height:2px;background:#999"></i><i style="left:94px;top:146px;width:10px;height:2px;background:#aaa"></i>
 <i style="left:185px;top:118px;width:83px;height:62px;border:1px solid #f6f6f6"></i>
 <i style="left:189px;top:125px;width:11px;height:2px;background:#999"></i><i style="left:256px;top:125px;width:8px;height:2px;background:#aaa"></i>
 <i style="left:189px;top:132px;width:11px;height:2px;background:#555"></i><i style="left:255px;top:132px;width:9px;height:2px;background:#f08a8a"></i>
 <i style="left:189px;top:140px;width:6px;height:2px;background:#999"></i><i style="left:254px;top:141px;width:6px;height:2px;background:#ccc"></i>
 <i style="left:189px;top:149px;width:11px;height:2px;background:#777"></i><i style="left:254px;top:151px;width:6px;height:2px;background:#ccc"></i>
 <i style="left:189px;top:161px;width:17px;height:2px;background:#666"></i><i style="left:255px;top:161px;width:9px;height:2px;background:#6ea2ff"></i>
 <i style="left:5px;top:158px;width:173px;height:14px;background:#fff7ea"></i>
 <i style="left:9px;top:161px;width:2px;height:3px;background:#e6a23c"></i><i style="left:13px;top:162px;width:10px;height:2px;background:#f3d19e"></i>
 <i style="left:13px;top:167px;width:88px;height:1px;background:#ddd"></i>
 <i style="left:188px;top:172px;width:75px;height:8px;background:#95d475;border-radius:1px;opacity:1"></i><i style="left:260px;top:172px;width:2px;height:8px;background:#3f9a20"></i>
</div>
<div class="t" style="left:117px;top:349px;font-size:12px;color:#5c5f66;letter-spacing:0.050px">image/2025-11-19/nncsxrbar.png</div>

<svg class="ico" style="left:358.5px;top:166.5px" width="25" height="25" viewBox="0 0 25 25"><defs><clipPath id="avca"><circle cx="12.500" cy="12.500" r="12.300"/></clipPath><filter id="avba" x="-20%" y="-20%" width="140%" height="140%"><feGaussianBlur stdDeviation="0.800"/></filter></defs><g clip-path="url(#avca)"><rect width="25" height="25" fill="#f3efdf"/><g filter="url(#avba)"><ellipse cx="12.500" cy="22" rx="12" ry="7" fill="#f6f4e4"/><ellipse cx="20.500" cy="12.500" rx="3.600" ry="4.600" fill="#ecd3c2"/><ellipse cx="4.800" cy="12" rx="3.400" ry="3.800" fill="#efd6b0"/><ellipse cx="12.200" cy="8" rx="7.400" ry="6.600" fill="#3f2418"/><ellipse cx="7.200" cy="9.500" rx="2.600" ry="4" fill="#6e4232"/><ellipse cx="12.900" cy="12" rx="4.300" ry="5" fill="#f0caa2"/><ellipse cx="12.900" cy="14.200" rx="1.400" ry="1.100" fill="#8a4a30"/><circle cx="11.200" cy="10.800" r=".7" fill="#4a2a1c"/><circle cx="14.700" cy="10.800" r=".7" fill="#4a2a1c"/></g></g><circle cx="12.500" cy="12.500" r="12.100" fill="none" stroke="#e4ded2" stroke-width=".5"/></svg>
<!-- AI reply -->
<div class="abs" style="left:60px;top:401px;width:24px;height:24px;border-radius:50%;background:#a0cfff"></div>
<svg class="ico" style="left:63px;top:404px" width="18" height="18" viewBox="0 0 18 18"><g fill="none" stroke="#fff" stroke-width="1.200" stroke-linecap="round" stroke-linejoin="round"><path d="M12.500 2.400A7.400 7.400 0 1 0 16 6.600"/><path d="M5 12 7.700 5.400h.6L11 12M6 9.800h4M13 6.600V12"/></g></svg>
<div class="abs" id="aimsg" style="left:93px;top:401px;width:291px;height:459px;overflow:hidden;background:#f4f4f5;border-radius:6px 6px 0 0">
  <div class="abs" style="left:8px;top:8px;width:54px;height:20px;border:1px solid #e9e9eb;border-radius:4px;background:#f4f4f5"></div>
  <div class="t" style="left:16px;top:12px;font-size:12px;color:#909399">收起</div>
  <svg class="ico" style="left:44px;top:15px" width="9" height="6" viewBox="0 0 9 6"><path d="M.8 5 4.500 1.300 8.200 5" fill="none" stroke="#909399" stroke-width="1"/></svg>
  <div class="abs" style="left:7px;top:39px;width:280px;font-size:12px;line-height:18px;color:#303133;white-space:pre">根据您的UI稿描述，我为您生成了对应的Vue3组
件。该组件严格遵循了您的布局、配色、交互和代码
规范要求。</div>
  <div class="abs" id="code" style="left:7px;top:97px;width:276px;height:370px;background:#282c34;border-radius:4px;overflow:hidden">
<div class="cl" style="top:13px"><span class="cp">&lt;</span><span class="ct">template</span><span class="cp">&gt;</span></div>
<div class="cl" style="top:31px">  <span class="cp">&lt;</span><span class="ct">div</span> <span class="ca">class</span><span class="cp">=</span><span class="cs">"page-container"</span><span class="cp">&gt;</span></div>
<div class="cl" style="top:49px">    <span class="cc">&lt;!-- 顶部面包屑 --&gt;</span></div>
<div class="cl" style="top:67px">    <span class="cp">&lt;</span><span class="ct">div</span> <span class="ca">class</span><span class="cp">=</span><span class="cs">"breadcrumb-contain</span></div>
<div class="cl" style="top:85px"><span class="cs">er"</span><span class="cp">&gt;</span></div>
<div class="cl" style="top:103px">      <span class="cp">&lt;</span><span class="ct">el-breadcrumb</span> <span class="ca">separator</span></div>
<div class="cl" style="top:121px"><span class="cp">=</span><span class="cs">"/"</span><span class="cp">&gt;</span></div>
<div class="cl" style="top:139px">        <span class="cp">&lt;</span><span class="ct">el-breadcrumb-item</span><span class="cp">&gt;</span>首页<span class="cp">&lt;/</span><span class="ct">e</span></div>
<div class="cl" style="top:157px"><span class="ct">l-breadcrumb-item</span><span class="cp">&gt;</span></div>
<div class="cl" style="top:175px">        <span class="cp">&lt;</span><span class="ct">el-breadcrumb-item</span><span class="cp">&gt;</span>销售管理</div>
<div class="cl" style="top:193px"><span class="cp">&lt;/</span><span class="ct">el-breadcrumb-item</span><span class="cp">&gt;</span></div>
<div class="cl" style="top:211px">        <span class="cp">&lt;</span><span class="ct">el-breadcrumb-item</span><span class="cp">&gt;</span>客户与订</div>
<div class="cl" style="top:229px">单基本信息<span class="cp">&lt;/</span><span class="ct">el-breadcrumb-item</span><span class="cp">&gt;</span></div>
<div class="cl" style="top:247px">      <span class="cp">&lt;/</span><span class="ct">el-breadcrumb</span><span class="cp">&gt;</span></div>
<div class="cl" style="top:265px">      <span class="cp">&lt;</span><span class="ct">h2</span> <span class="ca">class</span><span class="cp">=</span><span class="cs">"page-title"</span><span class="cp">&gt;</span>客户与</div>
<div class="cl" style="top:283px">订单基本信息<span class="cp">&lt;/</span><span class="ct">h2</span><span class="cp">&gt;</span></div>
<div class="cl" style="top:301px">    <span class="cp">&lt;/</span><span class="ct">div</span><span class="cp">&gt;</span></div>
<div class="cl" style="top:319px"></div>
<div class="cl" style="top:337px">    <span class="cp">&lt;</span><span class="ct">div</span> <span class="ca">class</span><span class="cp">=</span><span class="cs">"content-wrapper"</span><span class="cp">&gt;</span></div>
<div class="cl" style="top:355px">      <span class="cc">&lt;!-- 第一部分: 客户与订单基本信息</span></div>
  </div>
</div>
<!-- tooltip -->
<div class="abs" style="left:57.500px;top:561px;width:8px;height:8px;background:#303133;transform:rotate(45deg);border-radius:1px"></div>
<div class="abs" style="left:61px;top:550px;width:83px;height:31px;border-radius:4px;background:#303133"></div>
<div class="t" style="left:73px;top:559px;font-size:12px;font-weight:500;color:#fff">国际化资源</div>
<!-- new chat -->
<div class="abs" style="left:175px;top:870px;width:100px;height:24px;border:1px solid #a0cfff;border-radius:12px;background:#ecf5ff"></div>
<svg class="ico" style="left:187px;top:876px" width="12" height="12" viewBox="0 0 12 12"><g fill="none" stroke="#409eff" stroke-width="1" stroke-linejoin="round" stroke-linecap="round"><path d="M1.800 1.200h8.400a1 1 0 0 1 1 1v5.600a1 1 0 0 1-1 1H4.200L2 10.800v-2h-.2a1 1 0 0 1-1-1V2.200a1 1 0 0 1 1-1z"/><path d="M6 3.400v3.200M4.400 5h3.200"/></g></svg>
<div class="t" style="left:203px;top:876px;font-size:12px;font-weight:700;color:#409eff">开启新对话</div>
<!-- input -->
<div class="abs" style="left:60px;top:904px;width:330px;height:92px;border:1px solid #dcdfe6;border-radius:4px;background:#fff"></div>
<div class="abs" style="left:61px;top:953px;width:328px;height:1px;background:#ebeef5"></div>
<div class="t" style="left:72px;top:912px;font-size:14px;color:#a8abb2">请描述您的需求</div>
<div class="abs" style="left:65px;top:963px;width:120px;height:24px;border:1px solid #e4e7ed;border-radius:4px;background:#f5f7fa"></div>
<div class="t" style="left:73px;top:969px;font-size:12px;color:#a8abb2">Gemini 3 Pro</div>
<svg class="ico" style="left:165px;top:972px" width="10" height="6" viewBox="0 0 10 6"><path d="M.8.800 5 5l4.200-4.200" fill="none" stroke="#a8abb2" stroke-width="1"/></svg>
<div class="abs" style="left:193px;top:963px;width:64px;height:24px;border:1px solid #409eff;border-radius:3px;background:#fff"></div>
<div class="abs" style="left:201px;top:969px;width:12px;height:12px;border-radius:2px;background:#409eff"></div>
<svg class="ico" style="left:203px;top:971px" width="8" height="8" viewBox="0 0 8 8"><path d="M1 4.200 3.200 6.400 7 1.600" fill="none" stroke="#fff" stroke-width="1.300"/></svg>
<div class="t" style="left:221px;top:969px;font-size:12px;font-weight:700;color:#409eff">自动</div>
<div class="abs" style="left:305px;top:959px;width:80px;height:32px;border-radius:16px;background:#409eff"></div>
<svg class="ico" style="left:321px;top:969px" width="13" height="13" viewBox="0 0 13 13"><path d="M12.400.6.800 5.600l3.800 1.600L10 2.800 5.800 8v3.800l2-2.600 2.400 1z" fill="#fff"/></svg>
<div class="t" style="left:341px;top:968px;font-size:14px;font-weight:700;color:#fff">发送</div>
<svg class="ico" style="left:381px;top:987px" width="8" height="8" viewBox="0 0 8 8"><path d="M7.500.500.500 7.500M7.500 4 4 7.500" stroke="#8a8d93" stroke-width="1"/></svg>
<div class="t" style="left:150px;top:1010px;font-size:12px;color:#606266">内容由 AI 生成，请仔细甄别</div>
<!--AI-CONTENT-->
<div class="abs" style="left:401px;top:124px;width:1169px;height:29px;background:#fff"></div>
<div class="abs" style="left:401px;top:124px;width:167px;height:30px;background:#fafbfc"></div>
<div class="abs" style="left:568px;top:153px;width:1002px;height:1px;background:#e4e7ed"></div>
<div class="abs" style="left:568px;top:124px;width:1px;height:29px;background:#e4e7ed"></div>
<div class="abs" style="left:628px;top:124px;width:1px;height:29px;background:#e4e7ed"></div>
<div class="t" style="left:421px;top:133px;font-size:12px;color:#409eff">客户与订单基本信息</div>
<svg class="ico" style="left:539px;top:135px" width="8" height="8" viewBox="0 0 8 8"><path d="M1 1l6 6M7 1 1 7" stroke="#409eff" stroke-width="1"/></svg>
<div class="t" style="left:584px;top:133px;font-size:12px;color:#303133">布局</div>
<div class="abs" style="left:1434px;top:129px;width:31px;height:20px;border-radius:3px;background:#ecf5ff"></div>
<div class="t" style="left:1438px;top:133px;font-size:12px;color:#409eff">设计</div>
<div class="abs" style="left:1471px;top:129px;width:31px;height:20px;border-radius:3px;background:#f4f4f5"></div>
<div class="t" style="left:1474.500px;top:133px;font-size:12px;color:#606266">DSL</div>
<div class="abs" style="left:1507px;top:129px;width:31px;height:20px;border-radius:3px;background:#f4f4f5"></div>
<div class="t" style="left:1511px;top:133px;font-size:12px;color:#606266">源码</div>
<svg class="ico" style="left:1548px;top:137px" width="11" height="3" viewBox="0 0 11 3"><g fill="#303133"><circle cx="1.500" cy="1.500" r="1.200"/><circle cx="5.500" cy="1.500" r="1.200"/><circle cx="9.500" cy="1.500" r="1.200"/></g></svg>
<div class="abs" style="left:1555px;top:166px;width:5px;height:632px;border-radius:3px;background:#eaebee"></div>
<div class="abs" id="sel"><div id="page">
<div class="t" style="left:431px;top:184px;font-size:14px;color:#5d6674">首页</div>
<div class="t" style="left:467.500px;top:184px;font-size:14px;color:#a3acb9">/</div>
<div class="t" style="left:481px;top:184px;font-size:14px;color:#5d6674">销售管理</div>
<div class="t" style="left:545.500px;top:184px;font-size:14px;color:#a3acb9">/</div>
<div class="t" style="left:559px;top:184px;font-size:14px;color:#5d6674">客户与订单基本信息</div>
<div class="t" style="left:431px;top:213px;font-size:20px;font-weight:500;color:#2b3340">客户与订单基本信息</div>
<div class="card" style="top:257px;height:340px"></div>
<div class="chd" style="left:452px;top:279px">客户与订单基本信息</div>
<div class="hl" style="left:432px;top:315px;width:1099px"></div>
<div class="lbl" style="left:452px;top:340px"><span class="req">*</span>客户名称*</div>
<div class="inp" style="left:452px;top:366px;width:337px"></div>
<div class="lbl" style="left:813.5px;top:340px">联系人</div>
<div class="inp" style="left:813.5px;top:366px;width:337px"></div>
<div class="lbl" style="left:1175px;top:340px">联系电话</div>
<div class="inp" style="left:1175px;top:366px;width:337px"></div>
<div class="lbl" style="left:452px;top:420px"><span class="req">*</span>订单日期*</div>
<div class="inp" style="left:452px;top:446px;width:337px"></div>
<div class="lbl" style="left:813.5px;top:420px">预计发货日期</div>
<div class="inp" style="left:813.5px;top:446px;width:337px"></div>
<div class="lbl" style="left:1175px;top:420px"><span class="req">*</span>销售代表*</div>
<div class="inp" style="left:1175px;top:446px;width:337px"></div>
<div class="lbl" style="left:452px;top:500px">支付方式</div>
<div class="inp" style="left:452px;top:526px;width:337px"></div>
<div class="lbl" style="left:813.5px;top:500px">订单来源</div>
<div class="inp" style="left:813.5px;top:526px;width:337px"></div>
<div class="lbl" style="left:1175px;top:500px">运输方式</div>
<div class="inp" style="left:1175px;top:526px;width:337px"></div>
<div class="ph" style="left:464px;top:375px">输入客户名称</div><svg class="ico" style="left:763px;top:375px" width="14" height="14" viewBox="0 0 14 14"><g fill="none" stroke="#a3acb9" stroke-width="1"><circle cx="6.600" cy="6.600" r="5.600"/><path d="M10.600 10.600 13 13" stroke-linecap="round"/></g></svg>
<div class="ph" style="left:825px;top:375px">输入联系人姓名</div>
<div class="ph" style="left:1187px;top:375px">输入联系电话</div>
<svg class="ico" style="left:464px;top:456px" width="12" height="12" viewBox="0 0 12 12"><g fill="none" stroke="#a3acb9" stroke-width=".9"><rect x=".6" y="1.600" width="10.800" height="9.800"/><path d="M.6 4.400h10.800M3.400.4v2.400M8.600.4v2.400"/><path d="M2.800 6.600h1.200M5.400 6.600h1.200M8 6.600h1.200M2.800 8.800h1.200M5.400 8.800h1.200M8 8.800h1.200" stroke-width="1"/></g></svg><div class="val" style="left:485px;top:455px">2025/11/18</div>
<svg class="ico" style="left:825px;top:456px" width="12" height="12" viewBox="0 0 12 12"><g fill="none" stroke="#a3acb9" stroke-width=".9"><rect x=".6" y="1.600" width="10.800" height="9.800"/><path d="M.6 4.400h10.800M3.400.4v2.400M8.600.4v2.400"/><path d="M2.800 6.600h1.200M5.400 6.600h1.200M8 6.600h1.200M2.800 8.800h1.200M5.400 8.800h1.200M8 8.800h1.200" stroke-width="1"/></g></svg><div class="ph" style="left:847px;top:455px;letter-spacing:.3px">年/月/日</div>
<div class="val" style="left:1187px;top:455px">张经理</div><svg class="ico" style="left:1488px;top:459px" width="10" height="6" viewBox="0 0 10 6"><path d="M.8.800 5 5l4.200-4.200" fill="none" stroke="#a3acb9" stroke-width="1"/></svg>
<div class="ph" style="left:464px;top:535px">请选择</div><svg class="ico" style="left:765px;top:539px" width="10" height="6" viewBox="0 0 10 6"><path d="M.8.800 5 5l4.200-4.200" fill="none" stroke="#a3acb9" stroke-width="1"/></svg>
<div class="ph" style="left:826px;top:535px">请选择</div><svg class="ico" style="left:1127px;top:539px" width="10" height="6" viewBox="0 0 10 6"><path d="M.8.800 5 5l4.200-4.200" fill="none" stroke="#a3acb9" stroke-width="1"/></svg>
<div class="ph" style="left:1187px;top:535px">请选择</div><svg class="ico" style="left:1488px;top:539px" width="10" height="6" viewBox="0 0 10 6"><path d="M.8.800 5 5l4.200-4.200" fill="none" stroke="#a3acb9" stroke-width="1"/></svg>
<div class="card" style="top:617px;height:261px"></div>
<div class="chd" style="left:452px;top:640px">商品明细</div>
<div class="hl" style="left:432px;top:676px;width:1099px"></div>
<div class="abs" style="left:452px;top:697px;width:1060px;height:40px;background:#e5eef9"></div>
<div class="hl" style="left:452px;top:737px;width:1060px;background:#dbe4ef"></div>
<div class="lbl" style="left:452px;top:710px">商品名称*</div>
<div class="lbl" style="left:675px;top:710px">规格型号</div>
<div class="lbl" style="left:810px;top:710px">单位</div>
<div class="lbl" style="left:899px;top:710px">数量*</div>
<div class="lbl" style="left:1033px;top:710px">单价*</div>
<div class="lbl" style="left:1167px;top:710px">折扣(%)</div>
<div class="lbl" style="left:1301px;top:710px">全额</div>
<div class="lbl" style="left:1459px;top:710px">操作</div>
<div class="inp" style="left:452px;top:748px;width:211px"></div><div class="ph" style="left:464px;top:757px">输入商品名称</div><svg class="ico" style="left:638px;top:757px" width="14" height="14" viewBox="0 0 14 14"><g fill="none" stroke="#a3acb9" stroke-width="1"><circle cx="6.600" cy="6.600" r="5.600"/><path d="M10.600 10.600 13 13" stroke-linecap="round"/></g></svg>
<div class="inp" style="left:675px;top:748px;width:122px"></div><div class="ph" style="left:687px;top:757px">规格</div>
<div class="inp" style="left:809px;top:748px;width:78px"></div><div class="val" style="left:820px;top:757px">个</div>
<div class="inp" style="left:899px;top:748px;width:122px"></div><div class="abs" style="left:988px;top:749px;width:1px;height:30px;background:#ced8e4"></div><div class="abs" style="left:989px;top:763px;width:31px;height:1px;background:#ced8e4"></div><div class="abs" style="left:989px;top:749px;width:31px;height:30px;background:#e6eef8;border-radius:0 3px 3px 0;z-index:-0"></div><div class="abs" style="left:989px;top:763px;width:31px;height:1px;background:#ced8e4"></div>
<div class="val" style="left:942px;top:757px">1</div>
<svg class="ico" style="left:1000px;top:753px" width="9" height="6" viewBox="0 0 9 6"><path d="M.8 5 4.500 1.300 8.200 5" fill="none" stroke="#8f98a5" stroke-width=".9"/></svg>
<svg class="ico" style="left:1000px;top:769px" width="9" height="6" viewBox="0 0 9 6"><path d="M.8 1 4.500 4.700 8.200 1" fill="none" stroke="#a3acb9" stroke-width=".9"/></svg>
<div class="inp" style="left:1033px;top:748px;width:122px"></div><div class="val" style="left:1080px;top:757px">0.00</div>
<div class="inp" style="left:1167px;top:748px;width:122px"></div><div class="val" style="left:1216px;top:757px">100</div>
<div class="t" style="left:1301px;top:757px;font-size:14px;color:#2b3340">¥0.00</div>
<svg class="ico" style="left:1465px;top:756px" width="15" height="16" viewBox="0 0 15 16"><g fill="none" stroke="#ef6f74" stroke-width="1.100"><path d="M.8 3.600h13.400M5 3.400V1.200h5v2.200M2.600 3.800v11h9.800v-11M5.800 6.800v5M9.200 6.800v5"/></g></svg>
<div class="hl" style="left:452px;top:808px;width:1060px;background:#dbe4ef"></div>
<div class="abs" style="left:452px;top:825px;width:113px;height:32px;border-radius:4px;background:#409eff"></div>
<svg class="ico" style="left:469px;top:835px" width="12" height="12" viewBox="0 0 12 12"><path d="M6 .8v10.400M.8 6h10.400" stroke="#d9ecff" stroke-width="1"/></svg>
<div class="t" style="left:493px;top:834px;font-size:14px;font-weight:500;color:#fff">添加商品</div>
<div class="card" style="top:898px;height:200px"></div>
<div class="chd" style="left:452px;top:921px">订单汇总</div>
<div class="hl" style="left:432px;top:957px;width:1099px"></div>
<div class="t" style="left:452px;top:1001px;font-size:15px;font-weight:500;color:#2b3340">订单信息确认</div>
<div class="abs" style="left:1073px;top:977px;width:1px;height:80px;background:#dbe4ef"></div>
<div class="t" style="left:1094px;top:981px;font-size:14px;color:#5d6674">商品总价:</div>
<div class="t" style="left:1476px;top:981px;font-size:14px;font-weight:700;color:#111">¥0.00</div>
<div class="t" style="left:1094px;top:1013px;font-size:14px;color:#5d6674">折扣金额:</div>
<div class="t" style="left:1472px;top:1013px;font-size:14px;font-weight:700;color:#ef6f74">-¥0.00</div>
</div></div>
<div class="abs" style="left:1365px;top:168px;width:49px;height:24px;border-radius:3px;background:#3481d6"></div>
<svg class="ico" style="left:1374px;top:174px" width="12" height="12" viewBox="0 0 12 12"><g fill="none" stroke="#e8f2fd" stroke-width="1" stroke-linejoin="round"><path d="M6 .8 11 3.200 6 5.600 1 3.200z"/><path d="M1 6l5 2.400L11 6M1 8.800l5 2.400 5-2.400"/></g></svg>
<div class="t" style="left:1388px;top:174px;font-size:12px;font-weight:700;color:#fff">Pic</div>
<div class="abs" style="left:1419px;top:168px;width:130px;height:24px;border-radius:3px;background:#3481d6"></div>
<svg class="ico" style="left:1428px;top:174px" width="12" height="12" viewBox="0 0 12 12"><g fill="none" stroke="#9fc7f2" stroke-width="1" stroke-linecap="round" stroke-linejoin="round"><path d="M6 .8v10.400M.8 6h10.400M4.600 2.200 6 .8l1.400 1.400M4.600 9.800 6 11.200l1.400-1.400M2.200 4.600.8 6l1.400 1.400M9.800 4.600 11.200 6 9.800 7.400"/></g></svg>
<svg class="ico" style="left:1454px;top:174px" width="10" height="11" viewBox="0 0 10 11"><g fill="none" stroke="#9fc7f2" stroke-width="1" stroke-linecap="round" stroke-linejoin="round"><path d="M5 10.500V1M1.800 4.200 5 1l3.200 3.200"/></g></svg>
<svg class="ico" style="left:1479px;top:174px" width="10" height="11" viewBox="0 0 10 11"><g fill="none" stroke="#9fc7f2" stroke-width="1" stroke-linecap="round" stroke-linejoin="round"><path d="M5 .5V10M1.800 6.800 5 10l3.200-3.200"/></g></svg>
<svg class="ico" style="left:1503px;top:174px" width="12" height="12" viewBox="0 0 12 12"><g fill="none" stroke="#9fc7f2" stroke-width="1" stroke-linecap="round" stroke-linejoin="round"><path d="M3 2.600V1.400a.6.600 0 0 1 .6-.6h7a.6.600 0 0 1 .6.600v7a.6.600 0 0 1-.6.600H9.400"/><rect x=".8" y="2.800" width="8.400" height="8.400" rx=".6"/><path d="M5 5v4M3 7h4"/></g></svg>
<svg class="ico" style="left:1528px;top:174px" width="12" height="12" viewBox="0 0 12 12"><g fill="none" stroke="#9fc7f2" stroke-width="1" stroke-linecap="round" stroke-linejoin="round"><path d="M.8 2.800h10.400M4 2.600V.8h4v1.800M2 3v8.200h8V3M4.600 5.200v3.800M7.400 5.200v3.800"/></g></svg>
<!--CENTER-CONTENT-->
<svg class="ico" style="left:1580px;top:132px" width="13" height="13" viewBox="0 0 13 13"><g fill="none" stroke="#303133" stroke-width="1.100" stroke-linejoin="round"><path d="M6.500.8 12 3.400 6.500 6 1 3.400z"/><path d="M1 6.400 6.500 9 12 6.400M1 9.400l5.500 2.600L12 9.400"/></g></svg>
<div class="t" style="left:1599px;top:132px;font-size:12px;color:#606266">Pic:</div>
<div class="t" style="left:1628px;top:132.500px;font-size:11.500px;font-style:italic;color:#909399">1csxqwv9</div>
<div class="abs" style="left:1571px;top:153px;width:349px;height:1px;background:#e4e7ed"></div>
<div class="abs" style="left:1657px;top:183px;width:263px;height:1px;background:#e4e7ed"></div>
<div class="abs" style="left:1657px;top:154px;width:1px;height:29px;background:#e4e7ed"></div>
<div class="abs" style="left:1744px;top:154px;width:1px;height:29px;background:#e4e7ed"></div>
<div class="abs" style="left:1832px;top:154px;width:1px;height:29px;background:#e4e7ed"></div>
<div class="t" style="left:1599px;top:162px;font-size:14px;font-weight:700;color:#409eff">设置</div>
<div class="t" style="left:1686px;top:162px;font-size:14px;color:#303133">CSS</div>
<div class="t" style="left:1767px;top:162px;font-size:14px;color:#303133">数据源</div>
<div class="t" style="left:1862px;top:162px;font-size:14px;color:#303133">定义</div>
<div class="sec" style="top:184px"></div>
<div class="sect" style="top:192px">状态数据</div>
<svg class="ico" style="left:1900px;top:192px" width="10" height="10" viewBox="0 0 10 10"><path d="M5 0v10M0 5h10" stroke="#303133" stroke-width="1.200"/></svg>
<div class="item" style="top:222px"></div><div class="itxt" style="top:229px">form</div><svg class="ico" style="left:1863px;top:230px" width="12" height="11" viewBox="0 0 12 11"><g stroke="#5a5d63" stroke-width=".8" stroke-linejoin="round"><path d="M.8 10.200l.9-3L8.200.9a.9.900 0 0 1 1.300 0l1 1a.9.900 0 0 1 0 1.300L4 9.500z" fill="#8d9096"/><path d="M7.200 1.900 9.500 4.200M1.700 7.200 4 9.500M3 8.400 8.600 2.800" fill="none"/></g></svg><svg class="ico" style="left:1888.300px;top:230px" width="11.500" height="11.500" viewBox="0 0 11 11"><g fill="none" stroke="#85888f" stroke-width=".9"><path d="M.6 2.400h9.800M3.600 2.200V.7h3.800v1.500M1.800 2.600v7.800h7.400V2.600M4.200 4.600v3.800M6.800 4.600v3.800"/></g></svg>
<div class="item" style="top:254px"></div><div class="itxt" style="top:261px">products</div><svg class="ico" style="left:1863px;top:262px" width="12" height="11" viewBox="0 0 12 11"><g stroke="#5a5d63" stroke-width=".8" stroke-linejoin="round"><path d="M.8 10.200l.9-3L8.200.9a.9.900 0 0 1 1.300 0l1 1a.9.900 0 0 1 0 1.300L4 9.500z" fill="#8d9096"/><path d="M7.200 1.900 9.500 4.200M1.700 7.200 4 9.500M3 8.400 8.600 2.800" fill="none"/></g></svg><svg class="ico" style="left:1888.300px;top:262px" width="11.500" height="11.500" viewBox="0 0 11 11"><g fill="none" stroke="#85888f" stroke-width=".9"><path d="M.6 2.400h9.800M3.600 2.200V.7h3.800v1.500M1.800 2.600v7.800h7.400V2.600M4.200 4.600v3.800M6.800 4.600v3.800"/></g></svg>
<div class="item" style="top:286px"></div><div class="itxt" style="top:293px">otherCost</div><svg class="ico" style="left:1863px;top:294px" width="12" height="11" viewBox="0 0 12 11"><g stroke="#5a5d63" stroke-width=".8" stroke-linejoin="round"><path d="M.8 10.200l.9-3L8.200.9a.9.900 0 0 1 1.300 0l1 1a.9.900 0 0 1 0 1.300L4 9.500z" fill="#8d9096"/><path d="M7.200 1.900 9.500 4.200M1.700 7.200 4 9.500M3 8.400 8.600 2.800" fill="none"/></g></svg><svg class="ico" style="left:1888.300px;top:294px" width="11.500" height="11.500" viewBox="0 0 11 11"><g fill="none" stroke="#85888f" stroke-width=".9"><path d="M.6 2.400h9.800M3.600 2.200V.7h3.800v1.500M1.800 2.600v7.800h7.400V2.600M4.200 4.600v3.800M6.800 4.600v3.800"/></g></svg>
<div class="item" style="top:318px"></div><div class="itxt" style="top:325px">shippingCost</div><svg class="ico" style="left:1863px;top:326px" width="12" height="11" viewBox="0 0 12 11"><g stroke="#5a5d63" stroke-width=".8" stroke-linejoin="round"><path d="M.8 10.200l.9-3L8.200.9a.9.900 0 0 1 1.300 0l1 1a.9.900 0 0 1 0 1.300L4 9.500z" fill="#8d9096"/><path d="M7.200 1.900 9.500 4.200M1.700 7.200 4 9.500M3 8.400 8.600 2.800" fill="none"/></g></svg><svg class="ico" style="left:1888.300px;top:326px" width="11.500" height="11.500" viewBox="0 0 11 11"><g fill="none" stroke="#85888f" stroke-width=".9"><path d="M.6 2.400h9.800M3.600 2.200V.7h3.800v1.500M1.800 2.600v7.800h7.400V2.600M4.200 4.600v3.800M6.800 4.600v3.800"/></g></svg>
<div class="sec" style="top:360px"></div>
<div class="sect" style="top:368px">计算属性</div>
<svg class="ico" style="left:1900px;top:368px" width="10" height="10" viewBox="0 0 10 10"><path d="M5 0v10M0 5h10" stroke="#303133" stroke-width="1.200"/></svg>
<div class="item" style="top:398px"></div><div class="itxt" style="top:405px">getPaymentLabel</div><svg class="ico" style="left:1863px;top:406px" width="12" height="11" viewBox="0 0 12 11"><g stroke="#5a5d63" stroke-width=".8" stroke-linejoin="round"><path d="M.8 10.200l.9-3L8.200.9a.9.900 0 0 1 1.300 0l1 1a.9.900 0 0 1 0 1.300L4 9.500z" fill="#8d9096"/><path d="M7.200 1.900 9.500 4.200M1.700 7.200 4 9.500M3 8.400 8.600 2.800" fill="none"/></g></svg><svg class="ico" style="left:1888.300px;top:406px" width="11.500" height="11.500" viewBox="0 0 11 11"><g fill="none" stroke="#85888f" stroke-width=".9"><path d="M.6 2.400h9.800M3.600 2.200V.7h3.800v1.500M1.800 2.600v7.800h7.400V2.600M4.200 4.600v3.800M6.800 4.600v3.800"/></g></svg>
<div class="item" style="top:430px"></div><div class="itxt" style="top:437px">finalTotalAmount</div><svg class="ico" style="left:1863px;top:438px" width="12" height="11" viewBox="0 0 12 11"><g stroke="#5a5d63" stroke-width=".8" stroke-linejoin="round"><path d="M.8 10.200l.9-3L8.200.9a.9.900 0 0 1 1.300 0l1 1a.9.900 0 0 1 0 1.300L4 9.500z" fill="#8d9096"/><path d="M7.200 1.900 9.500 4.200M1.700 7.200 4 9.500M3 8.400 8.600 2.800" fill="none"/></g></svg><svg class="ico" style="left:1888.300px;top:438px" width="11.500" height="11.500" viewBox="0 0 11 11"><g fill="none" stroke="#85888f" stroke-width=".9"><path d="M.6 2.400h9.800M3.600 2.200V.7h3.800v1.500M1.800 2.600v7.800h7.400V2.600M4.200 4.600v3.800M6.800 4.600v3.800"/></g></svg>
<div class="item" style="top:462px"></div><div class="itxt" style="top:469px">getSalesRepLabel</div><svg class="ico" style="left:1863px;top:470px" width="12" height="11" viewBox="0 0 12 11"><g stroke="#5a5d63" stroke-width=".8" stroke-linejoin="round"><path d="M.8 10.200l.9-3L8.200.9a.9.900 0 0 1 1.300 0l1 1a.9.900 0 0 1 0 1.300L4 9.500z" fill="#8d9096"/><path d="M7.200 1.900 9.500 4.200M1.700 7.200 4 9.500M3 8.400 8.600 2.800" fill="none"/></g></svg><svg class="ico" style="left:1888.300px;top:470px" width="11.500" height="11.500" viewBox="0 0 11 11"><g fill="none" stroke="#85888f" stroke-width=".9"><path d="M.6 2.400h9.800M3.600 2.200V.7h3.800v1.500M1.800 2.600v7.800h7.400V2.600M4.200 4.600v3.800M6.800 4.600v3.800"/></g></svg>
<div class="item" style="top:494px"></div><div class="itxt" style="top:501px">productTotalAmount</div><svg class="ico" style="left:1863px;top:502px" width="12" height="11" viewBox="0 0 12 11"><g stroke="#5a5d63" stroke-width=".8" stroke-linejoin="round"><path d="M.8 10.200l.9-3L8.200.9a.9.900 0 0 1 1.300 0l1 1a.9.900 0 0 1 0 1.300L4 9.500z" fill="#8d9096"/><path d="M7.200 1.900 9.500 4.200M1.700 7.200 4 9.500M3 8.400 8.600 2.800" fill="none"/></g></svg><svg class="ico" style="left:1888.300px;top:502px" width="11.500" height="11.500" viewBox="0 0 11 11"><g fill="none" stroke="#85888f" stroke-width=".9"><path d="M.6 2.400h9.800M3.600 2.200V.7h3.800v1.500M1.800 2.600v7.800h7.400V2.600M4.200 4.600v3.800M6.800 4.600v3.800"/></g></svg>
<div class="item" style="top:526px"></div><div class="itxt" style="top:533px">discountTotalAmount</div><svg class="ico" style="left:1863px;top:534px" width="12" height="11" viewBox="0 0 12 11"><g stroke="#5a5d63" stroke-width=".8" stroke-linejoin="round"><path d="M.8 10.200l.9-3L8.200.9a.9.900 0 0 1 1.300 0l1 1a.9.900 0 0 1 0 1.300L4 9.500z" fill="#8d9096"/><path d="M7.200 1.900 9.500 4.200M1.700 7.200 4 9.500M3 8.400 8.600 2.800" fill="none"/></g></svg><svg class="ico" style="left:1888.300px;top:534px" width="11.500" height="11.500" viewBox="0 0 11 11"><g fill="none" stroke="#85888f" stroke-width=".9"><path d="M.6 2.400h9.800M3.600 2.200V.7h3.800v1.500M1.800 2.600v7.800h7.400V2.600M4.200 4.600v3.800M6.800 4.600v3.800"/></g></svg>
<div class="sec" style="top:568px"></div>
<div class="sect" style="top:576px">组件方法</div>
<svg class="ico" style="left:1900px;top:576px" width="10" height="10" viewBox="0 0 10 10"><path d="M5 0v10M0 5h10" stroke="#303133" stroke-width="1.200"/></svg>
<div class="item" style="top:606px"></div><div class="itxt" style="top:613px">addProduct</div><svg class="ico" style="left:1863px;top:614px" width="12" height="11" viewBox="0 0 12 11"><g stroke="#5a5d63" stroke-width=".8" stroke-linejoin="round"><path d="M.8 10.200l.9-3L8.200.9a.9.900 0 0 1 1.300 0l1 1a.9.900 0 0 1 0 1.300L4 9.500z" fill="#8d9096"/><path d="M7.200 1.900 9.500 4.200M1.700 7.200 4 9.500M3 8.400 8.600 2.800" fill="none"/></g></svg><svg class="ico" style="left:1888.300px;top:614px" width="11.500" height="11.500" viewBox="0 0 11 11"><g fill="none" stroke="#85888f" stroke-width=".9"><path d="M.6 2.400h9.800M3.600 2.200V.7h3.800v1.500M1.800 2.600v7.800h7.400V2.600M4.200 4.600v3.800M6.800 4.600v3.800"/></g></svg>
<div class="item" style="top:638px"></div><div class="itxt" style="top:645px">submitOrder</div><svg class="ico" style="left:1863px;top:646px" width="12" height="11" viewBox="0 0 12 11"><g stroke="#5a5d63" stroke-width=".8" stroke-linejoin="round"><path d="M.8 10.200l.9-3L8.200.9a.9.900 0 0 1 1.300 0l1 1a.9.900 0 0 1 0 1.300L4 9.500z" fill="#8d9096"/><path d="M7.200 1.900 9.500 4.200M1.700 7.200 4 9.500M3 8.400 8.600 2.800" fill="none"/></g></svg><svg class="ico" style="left:1888.300px;top:646px" width="11.500" height="11.500" viewBox="0 0 11 11"><g fill="none" stroke="#85888f" stroke-width=".9"><path d="M.6 2.400h9.800M3.600 2.200V.7h3.800v1.500M1.800 2.600v7.800h7.400V2.600M4.200 4.600v3.800M6.800 4.600v3.800"/></g></svg>
<div class="item" style="top:670px"></div><div class="itxt" style="top:677px">removeProduct</div><svg class="ico" style="left:1863px;top:678px" width="12" height="11" viewBox="0 0 12 11"><g stroke="#5a5d63" stroke-width=".8" stroke-linejoin="round"><path d="M.8 10.200l.9-3L8.200.9a.9.900 0 0 1 1.300 0l1 1a.9.900 0 0 1 0 1.300L4 9.500z" fill="#8d9096"/><path d="M7.200 1.900 9.500 4.200M1.700 7.200 4 9.500M3 8.400 8.600 2.800" fill="none"/></g></svg><svg class="ico" style="left:1888.300px;top:678px" width="11.500" height="11.500" viewBox="0 0 11 11"><g fill="none" stroke="#85888f" stroke-width=".9"><path d="M.6 2.400h9.800M3.600 2.200V.7h3.800v1.500M1.800 2.600v7.800h7.400V2.600M4.200 4.600v3.800M6.800 4.600v3.800"/></g></svg>
<div class="item" style="top:702px"></div><div class="itxt" style="top:709px">calculateRowTotal</div><svg class="ico" style="left:1863px;top:710px" width="12" height="11" viewBox="0 0 12 11"><g stroke="#5a5d63" stroke-width=".8" stroke-linejoin="round"><path d="M.8 10.200l.9-3L8.200.9a.9.900 0 0 1 1.300 0l1 1a.9.900 0 0 1 0 1.300L4 9.500z" fill="#8d9096"/><path d="M7.200 1.900 9.500 4.200M1.700 7.200 4 9.500M3 8.400 8.600 2.800" fill="none"/></g></svg><svg class="ico" style="left:1888.300px;top:710px" width="11.500" height="11.500" viewBox="0 0 11 11"><g fill="none" stroke="#85888f" stroke-width=".9"><path d="M.6 2.400h9.800M3.600 2.200V.7h3.800v1.500M1.800 2.600v7.800h7.400V2.600M4.200 4.600v3.800M6.800 4.600v3.800"/></g></svg>
<div class="sec" style="top:744px"></div>
<div class="sect" style="top:752px">生命周期</div>
<svg class="ico" style="left:1900px;top:752px" width="10" height="10" viewBox="0 0 10 10"><path d="M5 0v10M0 5h10" stroke="#303133" stroke-width="1.200"/></svg>
<div class="sec" style="top:886px"></div>
<div class="sect" style="top:894px">侦听器</div>
<svg class="ico" style="left:1900px;top:894px" width="10" height="10" viewBox="0 0 10 10"><path d="M5 0v10M0 5h10" stroke="#303133" stroke-width="1.200"/></svg>
<svg class="ico" style="left:1724px;top:796px" width="38" height="38" viewBox="0 0 38 38"><ellipse cx="19" cy="37" rx="14" ry="1.200" fill="#f3f4f6"/><path d="M6.500 24.500V36h17V19.500H9z" fill="#eff0f4"/><path d="M23.500 19.500V36H32V24.500l-3-1.500z" fill="#e2e3ea"/><path d="M6.500 24.500 2.500 22l4-3.500z" fill="#e6e7ec"/><path d="M32 24.500l3-3.500-3.500-1.500-2.500 3z" fill="#e9eaef"/><path d="M7 19.500a6 6 0 0 1 1.500-11.500 8 8 0 0 1 13.500-3.500 6.500 6.500 0 0 1 10.500 5.500 5 5 0 0 1-1.500 9.500z" fill="#f1f2f5"/><path d="M14 12a5 5 0 0 1 8.500-3.500 4.500 4.500 0 0 1 6.500 3.500z" fill="#e8e9ee" opacity=".8"/></svg>
<div class="empt" style="top:849px">暂无数据</div>
<svg class="ico" style="left:1724px;top:937px" width="38" height="38" viewBox="0 0 38 38"><ellipse cx="19" cy="37" rx="14" ry="1.200" fill="#f3f4f6"/><path d="M6.500 24.500V36h17V19.500H9z" fill="#eff0f4"/><path d="M23.500 19.500V36H32V24.500l-3-1.500z" fill="#e2e3ea"/><path d="M6.500 24.500 2.500 22l4-3.500z" fill="#e6e7ec"/><path d="M32 24.500l3-3.500-3.500-1.500-2.500 3z" fill="#e9eaef"/><path d="M7 19.500a6 6 0 0 1 1.500-11.500 8 8 0 0 1 13.500-3.500 6.500 6.500 0 0 1 10.500 5.500 5 5 0 0 1-1.500 9.500z" fill="#f1f2f5"/><path d="M14 12a5 5 0 0 1 8.500-3.500 4.500 4.500 0 0 1 6.500 3.500z" fill="#e8e9ee" opacity=".8"/></svg>
<div class="empt" style="top:990px">暂无数据</div>
<!--RPANEL-CONTENT-->

<svg class="ico" style="left:1777px;top:1039px" width="12" height="12" viewBox="0 0 12 12"><g fill="none" stroke="#4a4d52" stroke-width=".9" stroke-linejoin="round" stroke-linecap="round"><rect x=".6" y="1" width="9.400" height="9.400" rx="1"/><path d="M.6 3.400H10M3 5.600l1.600 1.400L3 8.400M8.400 7l3 1.600-3 1.600"/></g></svg>
<div class="t" style="left:1791px;top:1039.500px;font-size:12px;color:#4a4d52">开发工具</div>
<div class="t" style="left:1850px;top:1039.500px;font-size:11px;color:#303133;font-family:'DejaVu Sans',sans-serif">⌘</div>
<div class="t" style="left:1865px;top:1039.500px;font-size:12px;color:#4a4d52">快捷键</div>
<!-- window corners -->
<div class="abs" style="left:0;top:0;width:8px;height:8px;background:radial-gradient(circle at 100% 100%,transparent 7px,#c9d9ea 7.500px,#5d7a9b 8.500px)"></div>
<div class="abs" style="left:1912px;top:0;width:8px;height:8px;background:radial-gradient(circle at 0 100%,transparent 7px,#c9d9ea 7.500px,#5478a8 8.500px)"></div>
<div class="abs" style="left:0;top:1047px;width:8px;height:8px;background:radial-gradient(circle at 100% 0,transparent 7px,#2a2c30 8px)"></div>
<div class="abs" style="left:1912px;top:1047px;width:8px;height:8px;background:radial-gradient(circle at 0 0,transparent 7px,#2a2c30 8px)"></div>
<!--STATUS-CONTENT-->
</body>
</html>
